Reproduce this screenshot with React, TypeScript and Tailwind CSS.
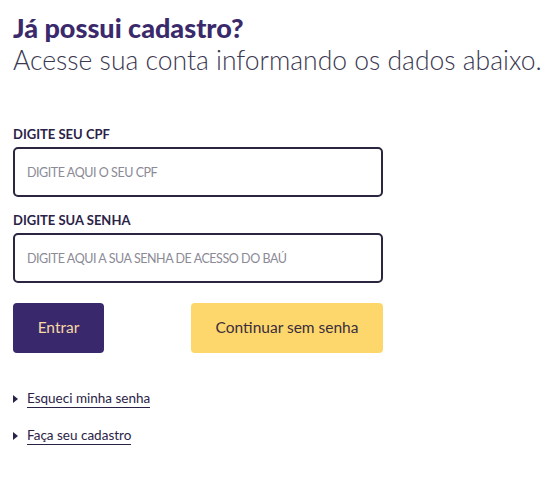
import React from 'react';

const Field = ({ label, placeholder, type = 'text' }: { label: string; placeholder: string; type?: string }) => (
  <div className="flex flex-col">
    <label className="text-[13px] font-bold text-[#2b2347] uppercase leading-none mb-[6px]">{label}</label>
    <input
      type={type}
      placeholder={placeholder}
      className="w-[370px] h-[50px] border-2 border-[#2b2540] rounded-[5px] px-[12px] text-[12.5px] tracking-[-0.45px] text-[#2b2540] placeholder:text-[#8b8a96] outline-none"
    />
  </div>
);

const LinkItem = ({ children }: { children: React.ReactNode }) => (
  <li className="flex items-center gap-[9px]">
    <span className="w-0 h-0 border-y-[4px] border-y-transparent border-l-[5px] border-l-[#2b2347]" />
    <a href="#" className="text-[13.5px] text-[#2b2347] border-b border-[#2b2347] leading-[18px]">
      {children}
    </a>
  </li>
);

export default function App() {
  return (
    <div className="min-h-screen bg-white px-[13px] pt-[12px] font-['Lato',sans-serif]">
      <h1 className="text-[27px] font-black text-[#3a2a6c] leading-[32px]">Já possui cadastro?</h1>
      <p className="text-[26.5px] font-light text-[#3b3850] leading-[32px] whitespace-nowrap">
        Acesse sua conta informando os dados abaixo.
      </p>

      <form className="mt-[52px] flex flex-col gap-[17px]">
        <Field label="Digite seu CPF" placeholder="DIGITE AQUI O SEU CPF" />
        <Field label="Digite sua senha" placeholder="DIGITE AQUI A SUA SENHA DE ACESSO DO BAÚ" type="password" />

        <div className="flex gap-[87px] mt-[3px]">
          <button type="button" className="w-[91px] h-[50px] bg-[#39286b] rounded-[4px] text-[15.5px] text-[#f7d9a6]">
            Entrar
          </button>
          <button type="button" className="w-[192px] h-[50px] bg-[#fdd76b] rounded-[4px] text-[15.5px] text-[#3b2d3e]">
            Continuar sem senha
          </button>
        </div>
      </form>

      <ul className="mt-[36px] flex flex-col gap-[18px]">
        <LinkItem>Esqueci minha senha</LinkItem>
        <LinkItem>Faça seu cadastro</LinkItem>
      </ul>
    </div>
  );
}
